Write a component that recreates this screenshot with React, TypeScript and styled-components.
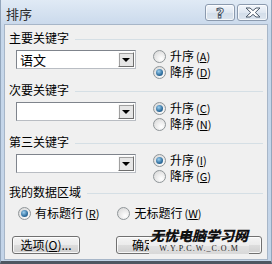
import React from 'react';
import styled, { createGlobalStyle } from 'styled-components';

const GlobalStyle = createGlobalStyle`
  html, body {
    margin: 0;
    padding: 0;
    background: #ffffff;
  }
  body {
    font-family: "Noto Sans CJK SC", "Liberation Sans", sans-serif;
    font-size: 12px;
    color: #000;
  }
`;

interface KeySection {
  title: string;
  value: string;
  asc: string;
  desc: string;
  checked: 'asc' | 'desc';
}

const sections: KeySection[] = [
  { title: '主要关键字', value: '语文', asc: 'A', desc: 'D', checked: 'desc' },
  { title: '次要关键字', value: '', asc: 'C', desc: 'N', checked: 'asc' },
  { title: '第三关键字', value: '', asc: 'I', desc: 'G', checked: 'asc' },
];

const Radio = ({ checked, label, hotkey }: { checked: boolean; label: string; hotkey: string }) => (
  <RadioItem>
    <RadioCircle $checked={checked} />
    <span>
      {label}
      <Paren>
        (<u>{hotkey}</u>)
      </Paren>
    </span>
  </RadioItem>
);

const App = () => {
  return (
    <>
      <GlobalStyle />
      <Dialog>
        <TitleBar>
          <Title>排序</Title>
          <CaptionButtons>
            <CaptionButton $width={30}>
              <HelpGlyph>?</HelpGlyph>
            </CaptionButton>
            <CaptionButton $width={31}>
              <svg width="16" height="11" viewBox="0 0 16 11">
                <polygon
                  points="1,1 5,1 8,3.6 11,1 15,1 10.3,5.5 15,10 11,10 8,7.4 5,10 1,10 5.7,5.5"
                  fill="#ffffff"
                  stroke="#4b5868"
                  strokeWidth="1"
                  strokeLinejoin="round"
                />
              </svg>
            </CaptionButton>
          </CaptionButtons>
        </TitleBar>

        <Body>
          {sections.map((s, i) => (
            <Section key={s.title} $first={i === 0}>
              <GroupHeader>
                <span>{s.title}</span>
                <GroupLine />
              </GroupHeader>
              <KeyRow>
                <Combo>
                  <ComboText>{s.value}</ComboText>
                  <DropButton>
                    <Arrow />
                  </DropButton>
                </Combo>
                <RadioColumn>
                  <Radio checked={s.checked === 'asc'} label="升序" hotkey={s.asc} />
                  <Radio checked={s.checked === 'desc'} label="降序" hotkey={s.desc} />
                </RadioColumn>
              </KeyRow>
            </Section>
          ))}

          <DataHeader>
            <span>我的数据区域</span>
            <GroupLine />
          </DataHeader>
          <DataRow>
            <Radio checked label="有标题行" hotkey="R" />
            <Radio checked={false} label="无标题行" hotkey="W" />
          </DataRow>

          <ButtonRow>
            <PushButton $width={68}>
              选项(<u>O</u>)...
            </PushButton>
            <RightButtons>
              <PushButton $width={70} $align="flex-start">
                确定
              </PushButton>
              <PushButton $width={70}>取消</PushButton>
            </RightButtons>
          </ButtonRow>
        </Body>

        <Watermark>
          <WatermarkTitle>无忧电脑学习网</WatermarkTitle>
          <WatermarkUrl>W.Y.P.C.W._C.O.M</WatermarkUrl>
        </Watermark>
      </Dialog>
    </>
  );
};

export default App;

const Dialog = styled.div`
  position: relative;
  width: 272px;
  height: 264px;
  box-sizing: border-box;
  display: flex;
  flex-direction: column;
  background: linear-gradient(#dae6f3, #c6d7ea 30px, #c3d4e8);
  border-left: 1px solid #93a6bc;
  border-right: 1px solid #93a6bc;
  border-bottom: 3px solid #4e5661;
  overflow: hidden;
`;

const TitleBar = styled.div`
  height: 24px;
  flex-shrink: 0;
  display: flex;
  align-items: center;
  justify-content: space-between;
  padding: 0 3px 0 5px;
  background: linear-gradient(#e0eaf5, #cbdaec);
`;

const Title = styled.div`
  font-size: 13px;
  color: #2a2a2a;
  margin-top: 2px;
`;

const CaptionButtons = styled.div`
  display: flex;
  gap: 2px;
  margin-top: 1px;
`;

const CaptionButton = styled.div<{ $width: number }>`
  width: ${(p) => p.$width}px;
  height: 17px;
  box-sizing: border-box;
  border: 1px solid #8b9aae;
  border-radius: 3px;
  background: linear-gradient(#f2f6fb, #dfe7f1 50%, #d2dde9 51%, #dce5ef);
  box-shadow: inset 0 0 0 1px rgba(255, 255, 255, 0.7);
  display: flex;
  align-items: center;
  justify-content: center;
`;

const HelpGlyph = styled.span`
  font-family: "DejaVu Sans", sans-serif;
  font-weight: bold;
  font-size: 14px;
  line-height: 14px;
  color: #ffffff;
  -webkit-text-stroke: 1px #4b5868;
`;

const Body = styled.div`
  flex: 1;
  margin: 0 3px 1px;
  background: #f0f0f0;
  border: 1px solid #a7b6c8;
  padding: 0 4px;
  display: flex;
  flex-direction: column;
`;

const Section = styled.div<{ $first: boolean }>`
  display: flex;
  flex-direction: column;
  margin-top: ${(p) => (p.$first ? 6 : 3)}px;
`;

const GroupHeader = styled.div`
  height: 14px;
  display: flex;
  align-items: center;
  gap: 6px;
  line-height: 14px;
`;

const GroupLine = styled.div`
  flex: 1;
  height: 0;
  margin-top: 3px;
  border-top: 1px solid #d5dfe5;
`;

const KeyRow = styled.div`
  display: flex;
  margin-top: 3px;
  padding-left: 7px;
`;

const Combo = styled.div`
  width: 120px;
  height: 19px;
  margin-top: 2px;
  box-sizing: border-box;
  display: flex;
  background: #ffffff;
  border: 1px solid #7f848c;
  border-right-color: #b9bdc3;
  border-bottom-color: #b9bdc3;
`;

const ComboText = styled.div`
  flex: 1;
  padding-left: 3px;
  font-size: 13px;
  line-height: 17px;
`;

const DropButton = styled.div`
  width: 16px;
  height: 15px;
  margin: 1px;
  box-sizing: border-box;
  background: #e6e6e6;
  border: 1px solid #f8f8f8;
  border-right-color: #6e6e6e;
  border-bottom-color: #6e6e6e;
  box-shadow: 1px 1px 0 #a0a0a0 inset;
  display: flex;
  align-items: center;
  justify-content: center;
`;

const Arrow = styled.div`
  width: 0;
  height: 0;
  border-left: 4px solid transparent;
  border-right: 4px solid transparent;
  border-top: 4px solid #000;
  margin-top: 1px;
`;

const RadioColumn = styled.div`
  display: flex;
  flex-direction: column;
  margin-left: 17px;
`;

const RadioItem = styled.div`
  height: 16px;
  display: flex;
  align-items: center;
  gap: 4px;
  line-height: 16px;
`;

const Paren = styled.span`
  margin-left: 2px;
  font-size: 11px;
`;

const RadioCircle = styled.div<{ $checked: boolean }>`
  width: 13px;
  height: 13px;
  box-sizing: border-box;
  border-radius: 50%;
  border: 1px solid #8f9598;
  background: radial-gradient(circle at 65% 70%, #ffffff, #dcdcdc 80%);
  display: flex;
  align-items: center;
  justify-content: center;

  &::after {
    content: '';
    display: ${(p) => (p.$checked ? 'block' : 'none')};
    width: 7px;
    height: 7px;
    border-radius: 50%;
    background: radial-gradient(circle at 40% 35%, #9dd0f0, #2f6e9e 60%, #1b4a72);
  }
`;

const DataHeader = styled(GroupHeader)`
  margin-top: 1px;
`;

const DataRow = styled.div`
  display: flex;
  gap: 18px;
  margin-top: 6px;
  padding-left: 9px;
`;

const ButtonRow = styled.div`
  display: flex;
  justify-content: space-between;
  margin-top: 15px;
  padding: 0 1px 0 3px;
`;

const RightButtons = styled.div`
  display: flex;
  gap: 6px;
`;

const PushButton = styled.div<{ $width: number; $align?: string }>`
  width: ${(p) => p.$width}px;
  height: 18px;
  box-sizing: border-box;
  border: 1px solid #707070;
  border-radius: 3px;
  background: linear-gradient(#f4f4f4, #ebebeb 50%, #dddddd 51%, #cfcfcf);
  box-shadow: inset 0 0 0 1px rgba(255, 255, 255, 0.8);
  display: flex;
  align-items: center;
  justify-content: ${(p) => p.$align ?? 'center'};
  padding-left: ${(p) => (p.$align ? 15 : 0)}px;
  font-size: 12px;
  line-height: 16px;
`;

/* watermark stamped over the OK / Cancel buttons in the screenshot */
const Watermark = styled.div`
  position: absolute;
  left: 148px;
  top: 236px;
  width: 100px;
  height: 18px;
  box-sizing: border-box;
  border-top: 1px solid #707070;
  background: linear-gradient(#f6f6f6, #ededed 50%, #e2e2e2 51%, #d8d8d8);
  display: flex;
  flex-direction: column;
  align-items: center;
`;

const WatermarkTitle = styled.div`
  margin-top: -10px;
  font-family: "Noto Sans CJK SC", sans-serif;
  font-weight: 900;
  font-style: italic;
  font-size: 14px;
  line-height: 17px;
  color: #111;
`;

const WatermarkUrl = styled.div`
  font-family: "Liberation Serif", serif;
  font-size: 8px;
  line-height: 9px;
  letter-spacing: 1px;
  color: #222;
`;
